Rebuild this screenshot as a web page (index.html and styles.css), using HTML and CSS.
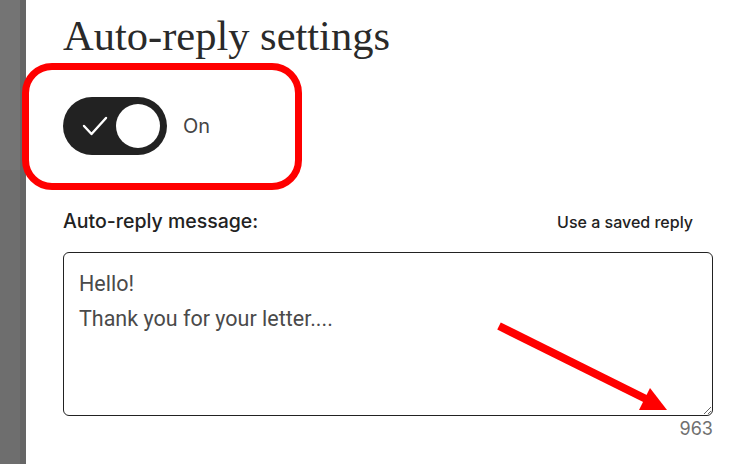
FILE: index.html
```html
<!DOCTYPE html>
<html lang="en">
<head>
    <meta charset="UTF-8">
    <meta name="viewport" content="width=device-width, initial-scale=1.0">
    <title>Auto-reply settings</title>
    <link rel="stylesheet" href="styles.css">
</head>
<body>
    <div class="sidebar"></div>

    <div class="panel">
        <h1>Auto-reply settings</h1>

        <div class="highlight">
            <label class="toggle-row">
                <span class="toggle">
                    <svg class="check" width="26" height="20" viewBox="0 0 26 20">
                        <path d="M2 10 L9.5 18 L24 2" fill="none" stroke="#fff" stroke-width="2.4" stroke-linecap="round" stroke-linejoin="round"/>
                    </svg>
                    <span class="knob"></span>
                </span>
                <span class="toggle-label">On</span>
            </label>
        </div>

        <div class="message-head">
            <label for="message">Auto-reply message:</label>
            <a href="#" class="saved-link">Use a saved reply</a>
        </div>

        <textarea id="message" class="message">Hello!
Thank you for your letter....</textarea>
        <div class="counter">963</div>
    </div>

    <!-- annotation arrow -->
    <svg class="arrow" width="735" height="464" viewBox="0 0 735 464">
        <line x1="499" y1="326" x2="646" y2="399" stroke="#ff0000" stroke-width="8"/>
        <polygon points="650,388 667,410 639,410" fill="#ff0000"/>
    </svg>
</body>
</html>
```

FILE: styles.css
```css
* {
    margin: 0;
    padding: 0;
    box-sizing: border-box;
}

body {
    display: flex;
    height: 464px;
    overflow: hidden;
    background-color: #fff;
    font-family: Inter, "Noto Sans", sans-serif;
    color: #222;
}

.sidebar {
    width: 26px;
    flex-shrink: 0;
    background: linear-gradient(#747474 0 170px, #6e6e6e 170px);
    border-right: 6px solid #666;
}

.panel {
    flex: 1;
    padding: 11px 22px 0 37px;
}

h1 {
    font-family: "Liberation Serif", "Times New Roman", serif;
    font-weight: normal;
    font-size: 42.5px;
    line-height: 50px;
    color: #2a2a2a;
}

/* red box around the switch */
.highlight {
    width: 280px;
    margin: 2px 0 0 -41px;
    padding: 27px 0 28px 34px;
    border: 7px solid #ff0000;
    border-radius: 30px;
}

.toggle-row {
    display: flex;
    align-items: center;
    gap: 16px;
}

.toggle {
    width: 104px;
    height: 58px;
    padding: 0 7px 0 19px;
    border-radius: 29px;
    background-color: #222;
    display: flex;
    align-items: center;
    justify-content: space-between;
}

.knob {
    width: 44px;
    height: 44px;
    border-radius: 50%;
    background-color: #fff;
}

.toggle-label {
    font-size: 20px;
    color: #444;
}

.message-head {
    display: flex;
    justify-content: space-between;
    align-items: baseline;
    margin-top: 19px;
    padding-right: 20px;
}

.message-head label {
    font-size: 19.5px;
    font-weight: 500;
    line-height: 25px;
}

.saved-link {
    font-size: 16px;
    font-weight: 500;
    color: #222;
    text-decoration: none;
}

.message {
    display: block;
    width: 100%;
    height: 164px;
    margin-top: 18px;
    padding: 13px 15px;
    border: 1px solid #222;
    border-radius: 6px;
    font-family: Roboto, "Noto Sans", sans-serif;
    font-size: 21.5px;
    line-height: 35px;
    color: #4a4a4a;
    outline: none;
}

.counter {
    text-align: right;
    font-size: 18px;
    line-height: 22px;
    color: #707070;
    margin-top: 2px;
}

.arrow {
    position: absolute;
    top: 0;
    left: 0;
    pointer-events: none;
}
```
